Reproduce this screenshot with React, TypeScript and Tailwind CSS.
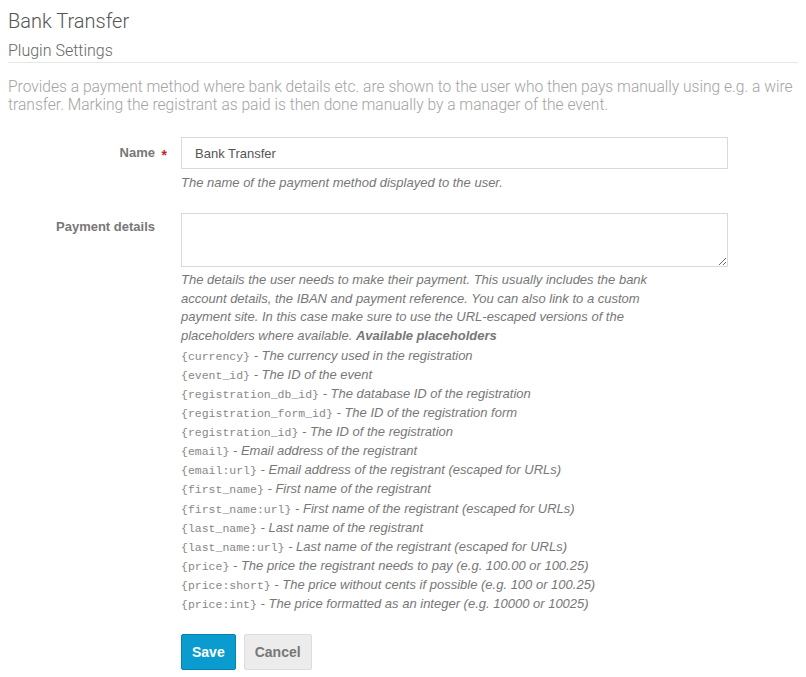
const PLACEHOLDERS: [string, string][] = [
  ["{currency}", "The currency used in the registration"],
  ["{event_id}", "The ID of the event"],
  ["{registration_db_id}", "The database ID of the registration"],
  ["{registration_form_id}", "The ID of the registration form"],
  ["{registration_id}", "The ID of the registration"],
  ["{email}", "Email address of the registrant"],
  ["{email:url}", "Email address of the registrant (escaped for URLs)"],
  ["{first_name}", "First name of the registrant"],
  ["{first_name:url}", "First name of the registrant (escaped for URLs)"],
  ["{last_name}", "Last name of the registrant"],
  ["{last_name:url}", "Last name of the registrant (escaped for URLs)"],
  ["{price}", "The price the registrant needs to pay (e.g. 100.00 or 100.25)"],
  ["{price:short}", "The price without cents if possible (e.g. 100 or 100.25)"],
  ["{price:int}", "The price formatted as an integer (e.g. 10000 or 10025)"],
];

export default function App() {
  return (
    <div className="min-h-screen bg-white px-2 pt-[6px] font-['Liberation_Sans',Arial,sans-serif]">
      {/* page header */}
      <div className="border-b border-[#e6e6e6] pb-0 font-['Roboto',sans-serif] font-light">
        <h1 className="text-[20px] leading-[30px] text-[#555]">Bank Transfer</h1>
        <h2 className="mt-[4px] text-[16px] leading-[22px] text-[#666]">Plugin Settings</h2>
      </div>
      <p className="mt-[15px] font-['Roboto',sans-serif] text-[15.6px] font-light leading-[18px] text-[#a3a3a3]">
        Provides a payment method where bank details etc. are shown to the user who then pays manually using e.g. a wire
        transfer. Marking the registrant as paid is then done manually by a manager of the event.
      </p>

      <form className="mt-[23px]">
        {/* Name */}
        <div className="flex">
          <div className="relative w-[147px] shrink-0 pt-[8px] text-right text-[13px] font-bold leading-[16px] text-[#777]">
            Name
            <span className="absolute -right-[12px] top-[10px] text-[14px] text-[#c0272d]">*</span>
          </div>
          <div className="ml-[26px] w-[547px]">
            <input
              defaultValue="Bank Transfer"
              className="h-[32px] w-full border border-[#dadada] px-[13px] text-[13px] text-[#555] outline-none"
            />
            <div className="mt-[5px] text-[13px] italic leading-[18px] text-[#777]">
              The name of the payment method displayed to the user.
            </div>
          </div>
        </div>

        {/* Payment details */}
        <div className="mt-[21px] flex">
          <div className="w-[147px] shrink-0 pt-[6px] text-right text-[13px] font-bold leading-[16px] text-[#777]">
            Payment details
          </div>
          <div className="ml-[26px] w-[547px]">
            <textarea className="block h-[54px] w-full resize-y border border-[#dadada] outline-none" />
            <div className="mt-[4px] w-[475px] text-[13px] italic leading-[18.7px] text-[#777]">
              The details the user needs to make their payment. This usually includes the bank account details, the IBAN
              and payment reference. You can also link to a custom payment site. In this case make sure to use the
              URL-escaped versions of the placeholders where available. <b>Available placeholders</b>
            </div>
            <ul className="text-[13px] italic text-[#777]">
              {PLACEHOLDERS.map(([code, desc]) => (
                <li key={code} className="h-[19.1px] whitespace-nowrap leading-[19.1px]">
                  <code className="font-['Liberation_Mono',monospace] text-[11.5px] leading-none not-italic text-[#888]">
                    {code}
                  </code>{" "}
                  - {desc}
                </li>
              ))}
            </ul>
          </div>
        </div>

        {/* actions */}
        <div className="ml-[173px] mt-[21px] flex gap-[8px]">
          <button
            type="button"
            className="h-[36px] rounded-[2px] border border-[#0781ad] bg-[#0b9ccf] px-[10px] text-[14px] font-bold text-white"
          >
            Save
          </button>
          <button
            type="button"
            className="h-[36px] rounded-[2px] border border-[#dcdcdc] bg-[#ececec] px-[10px] text-[14px] font-bold text-[#777]"
          >
            Cancel
          </button>
        </div>
      </form>
    </div>
  );
}
